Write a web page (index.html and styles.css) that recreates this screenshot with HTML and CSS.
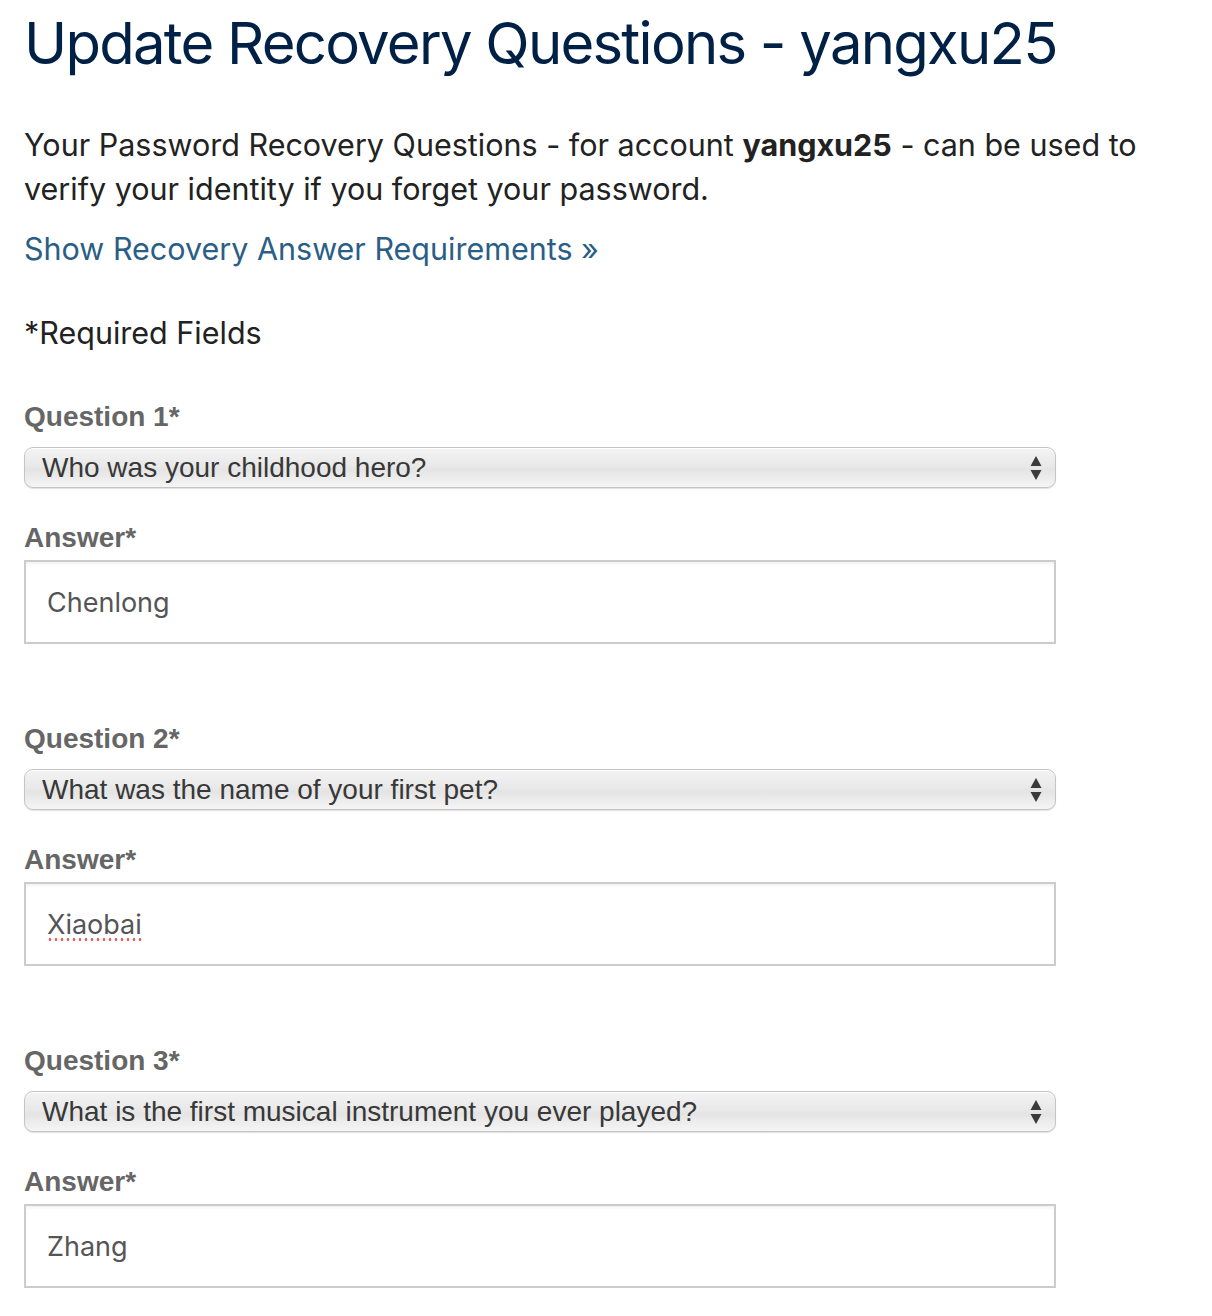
FILE: index.html
```html
<!DOCTYPE html>
<html lang="en">
<head>
<meta charset="utf-8">
<title>Update Recovery Questions</title>
<link rel="stylesheet" href="styles.css">
</head>
<body>
<main class="page">
  <h1 class="title">Update Recovery Questions - yangxu25</h1>
  <p class="intro">Your Password Recovery Questions - for account <strong>yangxu25</strong> - can be used to verify your identity if you forget your password.</p>
  <a class="req-link" href="#">Show Recovery Answer Requirements »</a>
  <p class="required">*Required Fields</p>

  <section class="qa">
    <label class="field-label" for="q1">Question 1*</label>
    <div class="select-wrap">
      <select id="q1" class="select"><option>Who was your childhood hero?</option></select>
      <svg class="arrows" width="12" height="26" viewBox="0 0 12 26"><path d="M6 1 L11.5 11 L0.5 11 Z" fill="#3a3a3a"/><path d="M0.5 15 L11.5 15 L6 25 Z" fill="#3a3a3a"/></svg>
    </div>
    <label class="field-label answer-label" for="a1">Answer*</label>
    <div class="answer-wrap">
      <input id="a1" class="answer" type="text" value="Chenlong">
    </div>
  </section>

  <section class="qa">
    <label class="field-label" for="q2">Question 2*</label>
    <div class="select-wrap">
      <select id="q2" class="select"><option>What was the name of your first pet?</option></select>
      <svg class="arrows" width="12" height="26" viewBox="0 0 12 26"><path d="M6 1 L11.5 11 L0.5 11 Z" fill="#3a3a3a"/><path d="M0.5 15 L11.5 15 L6 25 Z" fill="#3a3a3a"/></svg>
    </div>
    <label class="field-label answer-label" for="a2">Answer*</label>
    <div class="answer-wrap">
      <input id="a2" class="answer" type="text" value="Xiaobai">
      <span class="spell-mark" aria-hidden="true"></span>
    </div>
  </section>

  <section class="qa">
    <label class="field-label" for="q3">Question 3*</label>
    <div class="select-wrap">
      <select id="q3" class="select"><option>What is the first musical instrument you ever played?</option></select>
      <svg class="arrows" width="12" height="26" viewBox="0 0 12 26"><path d="M6 1 L11.5 11 L0.5 11 Z" fill="#3a3a3a"/><path d="M0.5 15 L11.5 15 L6 25 Z" fill="#3a3a3a"/></svg>
    </div>
    <label class="field-label answer-label" for="a3">Answer*</label>
    <div class="answer-wrap">
      <input id="a3" class="answer" type="text" value="Zhang">
    </div>
  </section>
</main>
</body>
</html>
```

FILE: styles.css
```css
* { box-sizing: border-box; }

html, body {
  margin: 0;
  padding: 0;
  background: #ffffff;
}

body {
  font-family: Inter, "Noto Sans", "Liberation Sans", sans-serif;
  color: #222222;
}

.page {
  width: 1056px;
  padding: 8px 0 0 24px;
}

.title {
  margin: 0;
  font-size: 58px;
  line-height: 70px;
  font-weight: 400;
  color: #002145;
  letter-spacing: -1.75px;
  white-space: nowrap;
}

.intro {
  margin: 45px 0 0 0;
  font-size: 30.5px;
  line-height: 44px;
  color: #222222;
  width: 1170px;
}

.intro strong {
  font-weight: 700;
}

.req-link {
  display: block;
  margin-top: 16px;
  font-size: 30.5px;
  line-height: 44px;
  color: #2b5e86;
  text-decoration: none;
}

.required {
  margin: 40px 0 0 0;
  font-size: 30.5px;
  line-height: 44px;
  color: #222222;
}

.qa {
  display: flex;
  flex-direction: column;
}

.required + .qa {
  margin-top: 46px;
}

.qa + .qa {
  margin-top: 79px;
}

.field-label {
  display: block;
  font-family: "Liberation Sans", Arial, sans-serif;
  font-weight: 700;
  font-size: 28px;
  line-height: 32px;
  color: #666666;
}

.select-wrap {
  position: relative;
  margin-top: 14px;
  height: 41px;
}

.select {
  appearance: none;
  -webkit-appearance: none;
  width: 100%;
  height: 41px;
  margin: 0;
  padding: 0 40px 0 17px;
  border: 1px solid #c4c4c4;
  border-radius: 9px;
  background: linear-gradient(to bottom, #f3f3f3 0%, #e9e9e9 45%, #e4e4e4 55%, #f5f5f5 100%);
  box-shadow: inset 0 1px 0 #ffffff, 0 1px 1px rgba(0,0,0,0.12);
  font-family: "Liberation Sans", Arial, sans-serif;
  font-size: 28px;
  color: #383838;
  outline: none;
}

.arrows {
  position: absolute;
  right: 14px;
  top: 8px;
  pointer-events: none;
}

.answer-label {
  margin-top: 34px;
}

.answer-wrap {
  position: relative;
  margin-top: 6px;
}

.answer {
  display: block;
  width: 100%;
  height: 84px;
  padding: 0 0 0 21px;
  border: 2px solid #cccccc;
  border-radius: 0;
  background: #ffffff;
  box-shadow: inset 0 2px 3px rgba(0,0,0,0.05);
  font-family: Inter, "Noto Sans", "Liberation Sans", sans-serif;
  font-size: 27px;
  color: #555555;
  outline: none;
}

.spell-mark {
  position: absolute;
  left: 23px;
  top: 56px;
  width: 96px;
  height: 3px;
  background-image: radial-gradient(circle, #f06262 1.2px, transparent 1.6px);
  background-size: 6px 3px;
  background-repeat: repeat-x;
  pointer-events: none;
}
```
